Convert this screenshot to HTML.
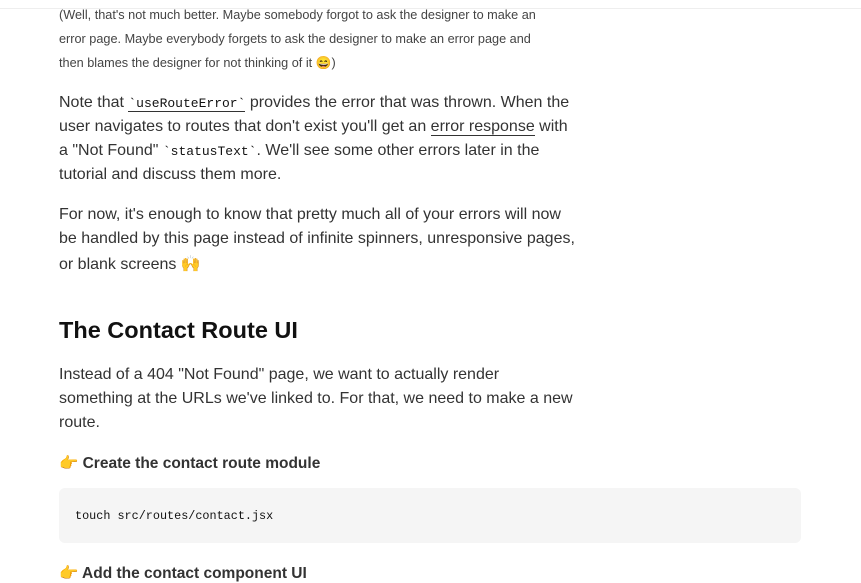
<!DOCTYPE html>
<html><head><style>
body{margin:0;width:861px;height:580px;overflow:hidden;background:#fff;font-family:"Liberation Sans",sans-serif;color:#333;position:relative}
.l{position:absolute;left:59px;white-space:nowrap}
.s{font-size:12.7px;color:#444}
.b{font-size:16px}
code{font-family:"Liberation Mono",monospace;font-size:13px;color:#111}
.u{border-bottom:1px solid #333}
h2{position:absolute;left:59px;top:317px;margin:0;font-size:23.5px;font-weight:bold;color:#111}
.st{font-weight:bold;font-size:15.5px;color:#333}
.cb{position:absolute;left:59px;top:488px;width:742px;height:55px;background:#f5f5f5;border-radius:6px}
.cb code{position:absolute;left:16px;top:21px;font-size:11.8px}
.top{position:absolute;left:0;top:8px;width:861px;height:1px;background:#eee}
</style></head><body>
<div class="top"></div>
<div class="l s" style="top:8px">(Well, that's not much better. Maybe somebody forgot to ask the designer to make an</div>
<div class="l s" style="top:32px">error page. Maybe everybody forgets to ask the designer to make an error page and</div>
<div class="l s" style="top:56px">then blames the designer for not thinking of it 😄)</div>
<div class="l b" style="top:94px">Note that <code class="u">`useRouteError`</code> provides the error that was thrown. When the</div>
<div class="l b" style="top:118px">user navigates to routes that don't exist you'll get an <span class="u">error response</span> with</div>
<div class="l b" style="top:142px">a "Not Found" <code>`statusText`</code>. We'll see some other errors later in the</div>
<div class="l b" style="top:166px">tutorial and discuss them more.</div>
<div class="l b" style="top:206px">For now, it's enough to know that pretty much all of your errors will now</div>
<div class="l b" style="top:230px">be handled by this page instead of infinite spinners, unresponsive pages,</div>
<div class="l b" style="top:254px">or blank screens 🙌</div>
<h2>The Contact Route UI</h2>
<div class="l b" style="top:366px">Instead of a 404 "Not Found" page, we want to actually render</div>
<div class="l b" style="top:390px">something at the URLs we've linked to. For that, we need to make a new</div>
<div class="l b" style="top:414px">route.</div>
<div class="l st" style="top:454px">👉 Create the contact route module</div>
<div class="cb"><code>touch src/routes/contact.jsx</code></div>
<div class="l st" style="top:564px">👉 Add the contact component UI</div>
</body></html>
